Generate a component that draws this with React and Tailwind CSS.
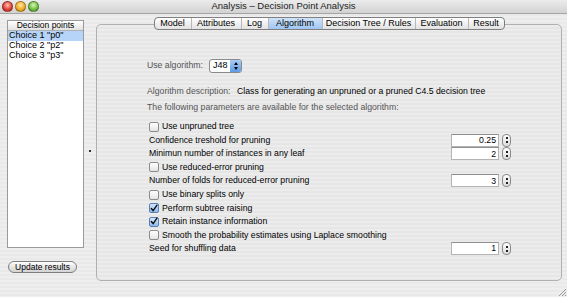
import React from "react";

function Light({ from, mid, to }) {
  return (
    <div
      className="w-[11px] h-[11px] rounded-full border border-black/30"
      style={{ background: `radial-gradient(circle at 50% 35%, ${from}, ${mid} 55%, ${to})` }}
    />
  );
}

function Checkbox({ checked }) {
  return checked ? (
    <div className="w-[10px] h-[10px] rounded-[2px] border border-[#5a7fb5] bg-[linear-gradient(#d2e6fd,#8fbaf0)] flex items-center justify-center">
      <svg width="9" height="9" viewBox="0 0 9 9">
        <path d="M1.5 4.5 L3.6 7 L7.8 0.8" fill="none" stroke="#111" strokeWidth="1.6" strokeLinecap="round" strokeLinejoin="round" />
      </svg>
    </div>
  ) : (
    <div className="w-[10px] h-[10px] rounded-[2px] border border-[#8c8c8c] bg-[linear-gradient(#ffffff,#e4e4e4)]" />
  );
}

function Spinner({ value }) {
  return (
    <div className="flex items-center gap-[3px]">
      <div className="w-[48px] h-[13px] bg-white border border-[#b4b4b4] border-t-[#8e8e8e] flex items-center justify-end pr-[2px] leading-none">
        {value}
      </div>
      <div className="w-[9px] h-[13px] rounded-[4px] border border-[#8a8a8a] bg-[linear-gradient(#fdfdfd,#dcdcdc)] flex flex-col items-center justify-center gap-[2px]">
        <div className="w-[2px] h-[2px] bg-[#222]" />
        <div className="w-[2px] h-[2px] bg-[#222]" />
      </div>
    </div>
  );
}

function Row({ children, right }) {
  return (
    <div className="h-[13.55px] flex items-center justify-between">
      <div className="flex items-center gap-[3px]">{children}</div>
      {right}
    </div>
  );
}

const tabs = ["Model", "Attributes", "Log", "Algorithm", "Decision Tree / Rules", "Evaluation", "Result"];
const tabW = [36, 50, 27, 54, 93, 53, 36];

export default function App() {
  return (
    <div className="w-[567px] h-[297px] overflow-hidden relative flex flex-col text-[8.7px] text-black font-['Liberation_Sans',Arial,sans-serif] bg-[repeating-linear-gradient(180deg,#eeeeee_0px,#eeeeee_2px,#e9e9e9_2px,#e9e9e9_4px)]">
      {/* Title bar */}
      <div className="h-[14px] shrink-0 relative flex items-center bg-[linear-gradient(#ececec,#d2d2d2)] border-b border-[#a5a5a5]">
        <div className="flex items-center gap-[2px] pl-[2px]">
          <Light from="#ffc2b8" mid="#e2463c" to="#a8201a" />
          <Light from="#ffe9a8" mid="#f1b12c" to="#b67a10" />
          <Light from="#d9f7b5" mid="#77c24a" to="#3c8a1c" />
        </div>
        <div className="absolute inset-0 flex items-center justify-center text-[9.5px] text-[#222]">
          Analysis – Decision Point Analysis
        </div>
      </div>

      <div className="flex flex-1 min-h-0">
        {/* Left column */}
        <div className="w-[84px] shrink-0 pl-[7px] pt-[6px] flex flex-col text-[9px]">
          <div className="w-[77px] h-[228px] bg-white border border-[#9a9a9a] flex flex-col">
            <div className="h-[10px] shrink-0 flex items-center justify-center text-[8.5px] bg-[linear-gradient(#ffffff,#e2e2e2)] border-b border-[#b0b0b0]">
              Decision points
            </div>
            <div className="h-[10px] flex items-center pl-[1px] bg-[#b5d4f8]">Choice 1 "p0"</div>
            <div className="h-[10px] flex items-center pl-[1px]">Choice 2 "p2"</div>
            <div className="h-[10px] flex items-center pl-[1px]">Choice 3 "p3"</div>
          </div>
          <div className="mt-[13px] ml-[1px] w-[69px] h-[12px] rounded-full border border-[#7d7d7d] bg-[linear-gradient(#ffffff,#e6e6e6_50%,#d4d4d4)] flex items-center justify-center text-[8.5px]">
            Update results
          </div>
        </div>

        {/* Divider */}
        <div className="w-[12px] shrink-0 flex items-center justify-center">
          <div className="w-[2px] h-[2px] bg-[#333] mt-[-10px]" />
        </div>

        {/* Right panel */}
        <div className="w-[466px] shrink-0 pt-[10px]">
          <div className="h-[257px] border border-[#b0b0b0] rounded-[5px] bg-[repeating-linear-gradient(180deg,#ececec_0px,#ececec_2px,#e6e6e6_2px,#e6e6e6_4px)] flex flex-col">
            <div className="flex justify-center mt-[-8px]">
              <div className="flex h-[13px] border border-[#7f7f7f] rounded-[4px] overflow-hidden bg-[linear-gradient(#ffffff,#f0f0f0_50%,#e2e2e2)]">
                {tabs.map((t, i) => (
                  <div
                    key={t}
                    style={{ width: tabW[i] }}
                    className={
                      "h-full flex items-center justify-center text-[9px] " +
                      (i > 0 ? "border-l border-[#b8b8b8] " : "") +
                      (t === "Algorithm" ? "bg-[linear-gradient(#cfe3fb,#9fc5f3)]" : "")
                    }
                  >
                    {t}
                  </div>
                ))}
              </div>
            </div>

            <div className="px-[50px] pt-[28px] flex flex-col">
              <div className="flex items-center h-[15px]">
                <span className="text-[#555] w-[62px]">Use algorithm:</span>
                <div className="w-[33px] h-[14px] rounded-[3px] border border-[#8a8a8a] bg-white flex items-center overflow-hidden">
                  <span className="pl-[3px] flex-1 text-[9px]">J48</span>
                  <div className="w-[11px] h-full bg-[linear-gradient(#a9cdf6,#5f9ae8)] flex flex-col items-center justify-center gap-[2px]">
                    <div className="w-0 h-0 border-l-[2px] border-r-[2px] border-b-[3px] border-l-transparent border-r-transparent border-b-black" />
                    <div className="w-0 h-0 border-l-[2px] border-r-[2px] border-t-[3px] border-l-transparent border-r-transparent border-t-black" />
                  </div>
                </div>
              </div>

              <div className="flex items-center h-[13px] mt-[12px]">
                <span className="text-[#555] w-[90px]">Algorithm description:</span>
                <span>Class for generating an unpruned or a pruned C4.5 decision tree</span>
              </div>
              <div className="flex items-center h-[13px] mt-[3px] text-[#555]">
                The following parameters are available for the selected algorithm:
              </div>

              <div className="flex flex-col pl-[2px] mt-[6px]">
                <Row><Checkbox /><span>Use unpruned tree</span></Row>
                <Row right={<Spinner value="0.25" />}><span>Confidence treshold for pruning</span></Row>
                <Row right={<Spinner value="2" />}><span>Minimun number of instances in any leaf</span></Row>
                <Row><Checkbox /><span>Use reduced-error pruning</span></Row>
                <Row right={<Spinner value="3" />}><span>Number of folds for reduced-error pruning</span></Row>
                <Row><Checkbox /><span>Use binary splits only</span></Row>
                <Row><Checkbox checked /><span>Perform subtree raising</span></Row>
                <Row><Checkbox checked /><span>Retain instance information</span></Row>
                <Row><Checkbox /><span>Smooth the probability estimates using Laplace smoothing</span></Row>
                <Row right={<Spinner value="1" />}><span>Seed for shuffling data</span></Row>
              </div>
            </div>
          </div>
        </div>
      </div>

      {/* resize grip */}
      <svg className="absolute right-0 bottom-0" width="10" height="10" viewBox="0 0 10 10">
        <path d="M9 2 L2 9 M9 5 L5 9 M9 8 L8 9" stroke="#9a9a9a" strokeWidth="1" />
      </svg>
    </div>
  );
}
